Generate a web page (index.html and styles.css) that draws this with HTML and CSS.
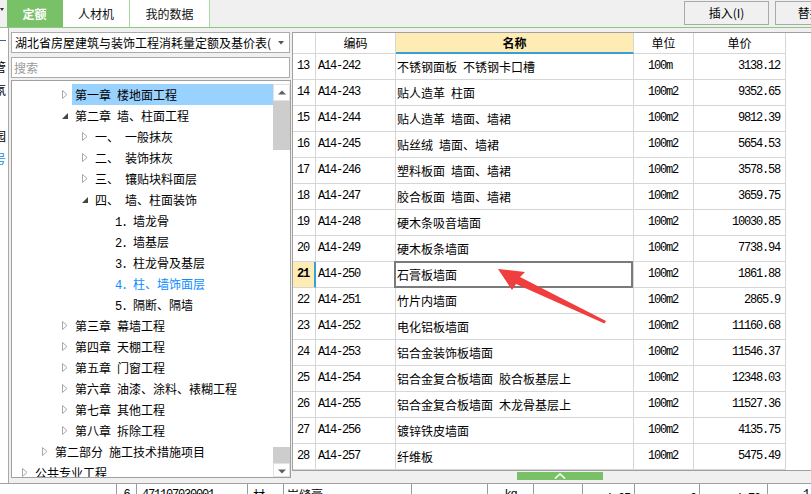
FILE: index.html
```html
<!DOCTYPE html>
<html lang="zh-CN">
<head>
<meta charset="utf-8">
<title>定额</title>
<link rel="stylesheet" href="styles.css">
</head>
<body>
<div class="screen">
  <header class="topbar">
    <div class="corner"><svg class="corner-caret" width="4" height="4" viewBox="0 0 4 4"><path d="M0 0H4L2 3Z" fill="#333"/></svg></div>
    <nav class="tabs">
      <div class="tab tab-a active">定额</div>
      <div class="tab tab-b">人材机</div>
      <div class="tab tab-c">我的数据</div>
    </nav>
    <div class="tools">
      <button class="btn">插入(I)</button>
      <button class="btn">替换(R)</button>
    </div>
  </header>

  <div class="middle">
    <aside class="strip">
      <div class="strip-rule"></div>
      <div class="strip-line"><span>管</span></div>
      <div class="strip-line"><span>氛</span></div>
      <div class="strip-line"><span>、</span></div>
      <div class="strip-line"><span>园</span></div>
      <div class="strip-line blue"><span>号</span></div>
    </aside>

    <section class="left">
      <div class="select">
        <span class="select-text">湖北省房屋建筑与装饰工程消耗量定额及基价表(2018)</span>
        <span class="select-arrow"><svg width="6" height="4" viewBox="0 0 6 4"><path d="M0 0H6L3 3.5Z" fill="#555"/></svg></span>
      </div>
      <div class="search">搜索</div>
      <div class="tree">
        <div class="tree-list">
          <div class="node d2"><span class="tw"><svg width="6" height="9" viewBox="0 0 6 9"><path d="M0.5 0.5L5 4.5L0.5 8.5Z" fill="#fff" stroke="#a8a8a8"/></svg></span><span class="label sel"><span class="pre">第一章</span>楼地面工程</span></div>
          <div class="node d2"><span class="tw"><svg width="6" height="6" viewBox="0 0 6 6"><path d="M6 0V6H0Z" fill="#444"/></svg></span><span class="label"><span class="pre">第二章</span>墙、柱面工程</span></div>
          <div class="node d3"><span class="tw"><svg width="6" height="9" viewBox="0 0 6 9"><path d="M0.5 0.5L5 4.5L0.5 8.5Z" fill="#fff" stroke="#a8a8a8"/></svg></span><span class="label"><span class="pre">一、</span>一般抹灰</span></div>
          <div class="node d3"><span class="tw"><svg width="6" height="9" viewBox="0 0 6 9"><path d="M0.5 0.5L5 4.5L0.5 8.5Z" fill="#fff" stroke="#a8a8a8"/></svg></span><span class="label"><span class="pre">二、</span>装饰抹灰</span></div>
          <div class="node d3"><span class="tw"><svg width="6" height="9" viewBox="0 0 6 9"><path d="M0.5 0.5L5 4.5L0.5 8.5Z" fill="#fff" stroke="#a8a8a8"/></svg></span><span class="label"><span class="pre">三、</span>镶贴块料面层</span></div>
          <div class="node d3"><span class="tw"><svg width="6" height="6" viewBox="0 0 6 6"><path d="M6 0V6H0Z" fill="#444"/></svg></span><span class="label"><span class="pre">四、</span>墙、柱面装饰</span></div>
          <div class="node d4"><span class="tw"></span><span class="label"><span class="pre n">1.</span>墙龙骨</span></div>
          <div class="node d4"><span class="tw"></span><span class="label"><span class="pre n">2.</span>墙基层</span></div>
          <div class="node d4"><span class="tw"></span><span class="label"><span class="pre n">3.</span>柱龙骨及基层</span></div>
          <div class="node d4 current"><span class="tw"></span><span class="label"><span class="pre n">4.</span>柱、墙饰面层</span></div>
          <div class="node d4"><span class="tw"></span><span class="label"><span class="pre n">5.</span>隔断、隔墙</span></div>
          <div class="node d2"><span class="tw"><svg width="6" height="9" viewBox="0 0 6 9"><path d="M0.5 0.5L5 4.5L0.5 8.5Z" fill="#fff" stroke="#a8a8a8"/></svg></span><span class="label"><span class="pre">第三章</span>幕墙工程</span></div>
          <div class="node d2"><span class="tw"><svg width="6" height="9" viewBox="0 0 6 9"><path d="M0.5 0.5L5 4.5L0.5 8.5Z" fill="#fff" stroke="#a8a8a8"/></svg></span><span class="label"><span class="pre">第四章</span>天棚工程</span></div>
          <div class="node d2"><span class="tw"><svg width="6" height="9" viewBox="0 0 6 9"><path d="M0.5 0.5L5 4.5L0.5 8.5Z" fill="#fff" stroke="#a8a8a8"/></svg></span><span class="label"><span class="pre">第五章</span>门窗工程</span></div>
          <div class="node d2"><span class="tw"><svg width="6" height="9" viewBox="0 0 6 9"><path d="M0.5 0.5L5 4.5L0.5 8.5Z" fill="#fff" stroke="#a8a8a8"/></svg></span><span class="label"><span class="pre">第六章</span>油漆、涂料、裱糊工程</span></div>
          <div class="node d2"><span class="tw"><svg width="6" height="9" viewBox="0 0 6 9"><path d="M0.5 0.5L5 4.5L0.5 8.5Z" fill="#fff" stroke="#a8a8a8"/></svg></span><span class="label"><span class="pre">第七章</span>其他工程</span></div>
          <div class="node d2"><span class="tw"><svg width="6" height="9" viewBox="0 0 6 9"><path d="M0.5 0.5L5 4.5L0.5 8.5Z" fill="#fff" stroke="#a8a8a8"/></svg></span><span class="label"><span class="pre">第八章</span>拆除工程</span></div>
          <div class="node d1"><span class="tw"><svg width="6" height="9" viewBox="0 0 6 9"><path d="M0.5 0.5L5 4.5L0.5 8.5Z" fill="#fff" stroke="#a8a8a8"/></svg></span><span class="label"><span class="pre">第二部分</span>施工技术措施项目</span></div>
          <div class="node d0"><span class="tw"><svg width="6" height="9" viewBox="0 0 6 9"><path d="M0.5 0.5L5 4.5L0.5 8.5Z" fill="#fff" stroke="#a8a8a8"/></svg></span><span class="label">公共专业工程</span></div>
        </div>
        <div class="vscroll">
          <div class="sb-btn"><svg width="8" height="5" viewBox="0 0 8 5"><path d="M0 4.5L4 0.5L8 4.5Z" fill="#606060"/></svg></div>
          <div class="sb-thumb"></div>
          <div class="sb-track"></div>
          <div class="sb-thumb small"></div>
          <div class="sb-btn down"><svg width="8" height="5" viewBox="0 0 8 5"><path d="M0 0.5L4 4.5L8 0.5Z" fill="#606060"/></svg></div>
        </div>
      </div>
    </section>

    <section class="right">
      <div class="grid">
        <div class="tr head">
          <div class="c num"></div>
          <div class="c code">编码</div>
          <div class="c name">名称</div>
          <div class="c unit">单位</div>
          <div class="c price">单价</div>
        </div>
        <div class="tr"><div class="c num">13</div><div class="c code">A14-242</div><div class="c name">不锈钢面板&ensp;不锈钢卡口槽</div><div class="c unit">100m</div><div class="c price">3138.12</div></div>
        <div class="tr"><div class="c num">14</div><div class="c code">A14-243</div><div class="c name">贴人造革&ensp;柱面</div><div class="c unit">100m2</div><div class="c price">9352.65</div></div>
        <div class="tr"><div class="c num">15</div><div class="c code">A14-244</div><div class="c name">贴人造革&ensp;墙面、墙裙</div><div class="c unit">100m2</div><div class="c price">9812.39</div></div>
        <div class="tr"><div class="c num">16</div><div class="c code">A14-245</div><div class="c name">贴丝绒&ensp;墙面、墙裙</div><div class="c unit">100m2</div><div class="c price">5654.53</div></div>
        <div class="tr"><div class="c num">17</div><div class="c code">A14-246</div><div class="c name">塑料板面&ensp;墙面、墙裙</div><div class="c unit">100m2</div><div class="c price">3578.58</div></div>
        <div class="tr"><div class="c num">18</div><div class="c code">A14-247</div><div class="c name">胶合板面&ensp;墙面、墙裙</div><div class="c unit">100m2</div><div class="c price">3659.75</div></div>
        <div class="tr"><div class="c num">19</div><div class="c code">A14-248</div><div class="c name">硬木条吸音墙面</div><div class="c unit">100m2</div><div class="c price">10030.85</div></div>
        <div class="tr"><div class="c num">20</div><div class="c code">A14-249</div><div class="c name">硬木板条墙面</div><div class="c unit">100m2</div><div class="c price">7738.94</div></div>
        <div class="tr selected"><div class="c num">21</div><div class="c code">A14-250</div><div class="c name">石膏板墙面</div><div class="c unit">100m2</div><div class="c price">1861.88</div></div>
        <div class="tr"><div class="c num">22</div><div class="c code">A14-251</div><div class="c name">竹片内墙面</div><div class="c unit">100m2</div><div class="c price">2865.9</div></div>
        <div class="tr"><div class="c num">23</div><div class="c code">A14-252</div><div class="c name">电化铝板墙面</div><div class="c unit">100m2</div><div class="c price">11160.68</div></div>
        <div class="tr"><div class="c num">24</div><div class="c code">A14-253</div><div class="c name">铝合金装饰板墙面</div><div class="c unit">100m2</div><div class="c price">11546.37</div></div>
        <div class="tr"><div class="c num">25</div><div class="c code">A14-254</div><div class="c name">铝合金复合板墙面&ensp;胶合板基层上</div><div class="c unit">100m2</div><div class="c price">12348.03</div></div>
        <div class="tr"><div class="c num">26</div><div class="c code">A14-255</div><div class="c name">铝合金复合板墙面&ensp;木龙骨基层上</div><div class="c unit">100m2</div><div class="c price">11527.36</div></div>
        <div class="tr"><div class="c num">27</div><div class="c code">A14-256</div><div class="c name">镀锌铁皮墙面</div><div class="c unit">100m2</div><div class="c price">4135.75</div></div>
        <div class="tr"><div class="c num">28</div><div class="c code">A14-257</div><div class="c name">纤维板</div><div class="c unit">100m2</div><div class="c price">5475.49</div></div>
        <div class="tr"><div class="c num"></div><div class="c code"></div><div class="c name"></div><div class="c unit"></div><div class="c price"></div></div>
      </div>
      <div class="splitter">
        <div class="handle"><svg width="12" height="6" viewBox="0 0 12 6"><path d="M1 5.5L6 1L11 5.5" fill="none" stroke="#fff" stroke-width="1.6"/></svg></div>
      </div>
    </section>
  </div>

  <div class="bottom">
    <div class="bc w0"></div>
    <div class="bc w1 mono center">6</div>
    <div class="bc w2 mono">471107030001</div>
    <div class="bc w3">材</div>
    <div class="bc w4">岩缝膏</div>
    <div class="bc w5"></div>
    <div class="bc w6 mono center">kg</div>
    <div class="bc w7"></div>
    <div class="bc w8 mono right">1.05</div>
    <div class="bc w9 mono right">0</div>
    <div class="bc w10 mono right">1.70</div>
    <div class="bc w11 mono">1</div>
  </div>

  <svg class="annot" width="811" height="494" viewBox="0 0 811 494">
    <polygon points="498,269 525,272 520,277 606,321 604.5,323.5 516,284 512,290" fill="#f03e3e"/>
  </svg>
</div>
</body>
</html>
```

FILE: styles.css
```css
html, body {
  margin: 0;
  padding: 0;
  background: #f0f0f0;
}

.screen {
  position: relative;
  width: 811px;
  height: 494px;
  overflow: hidden;
  background: #f0f0f0;
  font-family: "Noto Sans CJK SC", "Liberation Sans", sans-serif;
  font-size: 12px;
  color: #000;
  display: flex;
  flex-direction: column;
}

/* ---------- top bar ---------- */
.topbar {
  height: 28px;
  flex: none;
  box-sizing: border-box;
  border-bottom: 1px solid #8dc87e;
  display: flex;
  overflow: hidden;
  background: #f0f0f0;
}

.corner {
  width: 7px;
  flex: none;
}

.corner-caret {
  display: block;
  margin-top: 8px;
}

.tabs {
  display: flex;
  flex: none;
}

.tab {
  height: 27px;
  line-height: 27px;
  box-sizing: border-box;
  text-align: center;
  background: #fff;
  border-right: 1px solid #a9d89c;
  font-size: 12px;
  color: #111;
}

.tab-a { width: 56px; }
.tab-b { width: 67px; }
.tab-c { width: 80px; }

.tab.active {
  background: #78c166;
  color: #fff;
  font-weight: bold;
  border-right-color: #78c166;
}

.tools {
  display: flex;
  gap: 6px;
  margin-left: 474px;
  flex: none;
}

.btn {
  width: 85px;
  height: 24px;
  margin-top: 1px;
  flex: none;
  box-sizing: border-box;
  border: 1px solid #a9a9a9;
  background: #f0f0f0;
  padding: 0;
  font-family: "Noto Sans CJK SC", "Liberation Sans", sans-serif;
  font-size: 12px;
  color: #000;
  line-height: 22px;
}

/* ---------- middle ---------- */
.middle {
  display: flex;
  height: 455px;
  flex: none;
}

.strip {
  width: 8px;
  flex: none;
  background: #fff;
  border-right: 1px solid #a8a8a8;
  padding-top: 12px;
  overflow: hidden;
}

.strip-rule {
  width: 6px;
  height: 1px;
  background: #3f5f8f;
  margin-bottom: 14px;
}

.strip-line {
  height: 23px;
  line-height: 23px;
  display: flex;
  justify-content: flex-end;
  padding-right: 2px;
  overflow: hidden;
  white-space: nowrap;
}

.strip-line span {
  flex: none;
}

.strip-line.blue {
  color: #1a8fe0;
}

/* ---------- left panel ---------- */
.left {
  width: 283px;
  flex: none;
  box-sizing: border-box;
  padding: 4px 1px 0 2px;
  display: flex;
  flex-direction: column;
}

.select {
  width: 279px;
  height: 21px;
  box-sizing: border-box;
  border: 1px solid #ababab;
  background: #fff;
  display: flex;
  align-items: center;
  padding-left: 3px;
}

.select-text {
  width: 256px;
  flex: none;
  overflow: hidden;
  white-space: nowrap;
  line-height: 19px;
}

.select-arrow {
  flex: 1;
  display: flex;
  justify-content: center;
  align-items: center;
  padding-left: 2px;
}

.select-arrow svg {
  display: block;
}

.search {
  width: 279px;
  height: 21px;
  box-sizing: border-box;
  margin-top: 4px;
  border: 1px solid #ababab;
  background: #fff;
  padding-left: 2px;
  line-height: 19px;
  color: #9a9a9a;
}

.tree {
  width: 280px;
  height: 398px;
  margin-top: 2px;
  box-sizing: border-box;
  border: 1px solid #a0a0a0;
  background: #fff;
  padding-top: 3px;
  display: flex;
}

.tree-list {
  flex: 1;
  overflow: hidden;
}

.node {
  height: 21px;
  display: flex;
  align-items: center;
  white-space: nowrap;
}

.d0 { padding-left: 10px; }
.d1 { padding-left: 30px; }
.d2 { padding-left: 50px; }
.d3 { padding-left: 70px; }
.d4 { padding-left: 90px; }

.tw {
  width: 10px;
  flex: none;
  display: flex;
  align-items: center;
}

.tw svg {
  display: block;
}

.label {
  flex: 1;
  height: 21px;
  line-height: 21px;
  padding-left: 3px;
}

.label.sel {
  background: #99d1ff;
}

.pre {
  display: inline-block;
  margin-right: 6px;
}

.pre.n {
  width: 12px;
  font-family: "Liberation Mono", monospace;
  letter-spacing: -1.2px;
}

.node.current .label {
  color: #0a8cff;
}

.vscroll {
  width: 17px;
  flex: none;
  display: flex;
  flex-direction: column;
}

.sb-btn {
  height: 17px;
  flex: none;
  box-sizing: border-box;
  border: 1px solid #e2e2e2;
  background: #fff;
  display: flex;
  justify-content: center;
  align-items: center;
}

.sb-btn.down {
  height: 14px;
  align-items: flex-start;
  padding-top: 5px;
}

.sb-btn svg {
  display: block;
}

.sb-thumb {
  height: 49px;
  flex: none;
  background: #cdcdcd;
}

.sb-thumb.small {
  height: 16px;
}

.sb-track {
  flex: 1;
  background: #fff;
}

/* ---------- right panel ---------- */
.right {
  flex: 1;
  min-width: 0;
  padding-top: 4px;
  display: flex;
  flex-direction: column;
}

.grid {
  height: 439px;
  box-sizing: border-box;
  border-top: 1px solid #a0a0a0;
  border-left: 1px solid #a0a0a0;
  border-bottom: 1px solid #a0a0a0;
  background: #fff;
  overflow: hidden;
}

.tr {
  display: flex;
  height: 26px;
}

.c {
  box-sizing: border-box;
  border-right: 1px solid #d6d6d6;
  border-bottom: 1px solid #d6d6d6;
  line-height: 25px;
  white-space: nowrap;
  overflow: hidden;
  flex: none;
}

.num {
  width: 23px;
  padding-left: 4px;
}

.code {
  width: 80px;
  padding-left: 2px;
}

.name {
  width: 238px;
  padding-left: 1px;
}

.unit {
  width: 60px;
  padding-left: 14px;
}

.price {
  width: 92px;
  text-align: right;
  padding-right: 5px;
}

.tr .num,
.tr .code,
.tr .unit,
.tr .price {
  font-family: "Liberation Mono", monospace;
  letter-spacing: -1.2px;
}

.tr.head {
  height: 21px;
}

.tr.head .c {
  line-height: 20px;
  text-align: center;
  padding: 0;
  font-family: "Noto Sans CJK SC", "Liberation Sans", sans-serif;
  letter-spacing: 0;
}

.tr.head .name {
  background: #feecb4;
  border-bottom: 2px solid #35a0d8;
  font-weight: bold;
  line-height: 19px;
}

.tr.selected .num {
  background: #feecb4;
  font-weight: bold;
  border-right: 2px solid #35a0d8;
}

.tr.selected .name {
  position: relative;
  overflow: visible;
}

.tr.selected .name::after {
  content: "";
  position: absolute;
  left: -2px;
  top: -1px;
  right: 0;
  bottom: -1px;
  border: 2px solid #7a7a7a;
}

.splitter {
  flex: 1;
  background: #f0f0f0;
}

.handle {
  width: 86px;
  height: 8px;
  margin: 1px 0 0 225px;
  background: #78c166;
  display: flex;
  justify-content: center;
  align-items: center;
}

.handle svg {
  display: block;
}

/* ---------- bottom strip ---------- */
.bottom {
  height: 11px;
  flex: none;
  box-sizing: border-box;
  border-top: 1px solid #a0a0a0;
  background: #fff;
  display: flex;
  overflow: hidden;
}

.bc {
  flex: none;
  box-sizing: border-box;
  border-right: 1px solid #9a9a9a;
  line-height: 22px;
  height: 22px;
  white-space: nowrap;
  overflow: hidden;
}

.bc.mono {
  font-family: "Liberation Mono", monospace;
  letter-spacing: -1.2px;
}

.bc.center { text-align: center; }
.bc.right { text-align: right; }

.w0 { width: 117px; }
.w1 { width: 20px; }
.w2 { width: 111px; padding-left: 5px; }
.w3 { width: 36px; padding-left: 5px; }
.w4 { width: 128px; padding-left: 3px; }
.w5 { width: 76px; }
.w6 { width: 46px; }
.w7 { width: 49px; }
.w8 { width: 52px; padding-right: 4px; }
.w9 { width: 65px; padding-right: 3px; }
.w10 { width: 68px; padding-right: 7px; }
.w11 { width: 80px; padding-left: 35px; border-right: none; }

/* ---------- annotation ---------- */
.annot {
  position: absolute;
  left: 0;
  top: 0;
  pointer-events: none;
}
```
